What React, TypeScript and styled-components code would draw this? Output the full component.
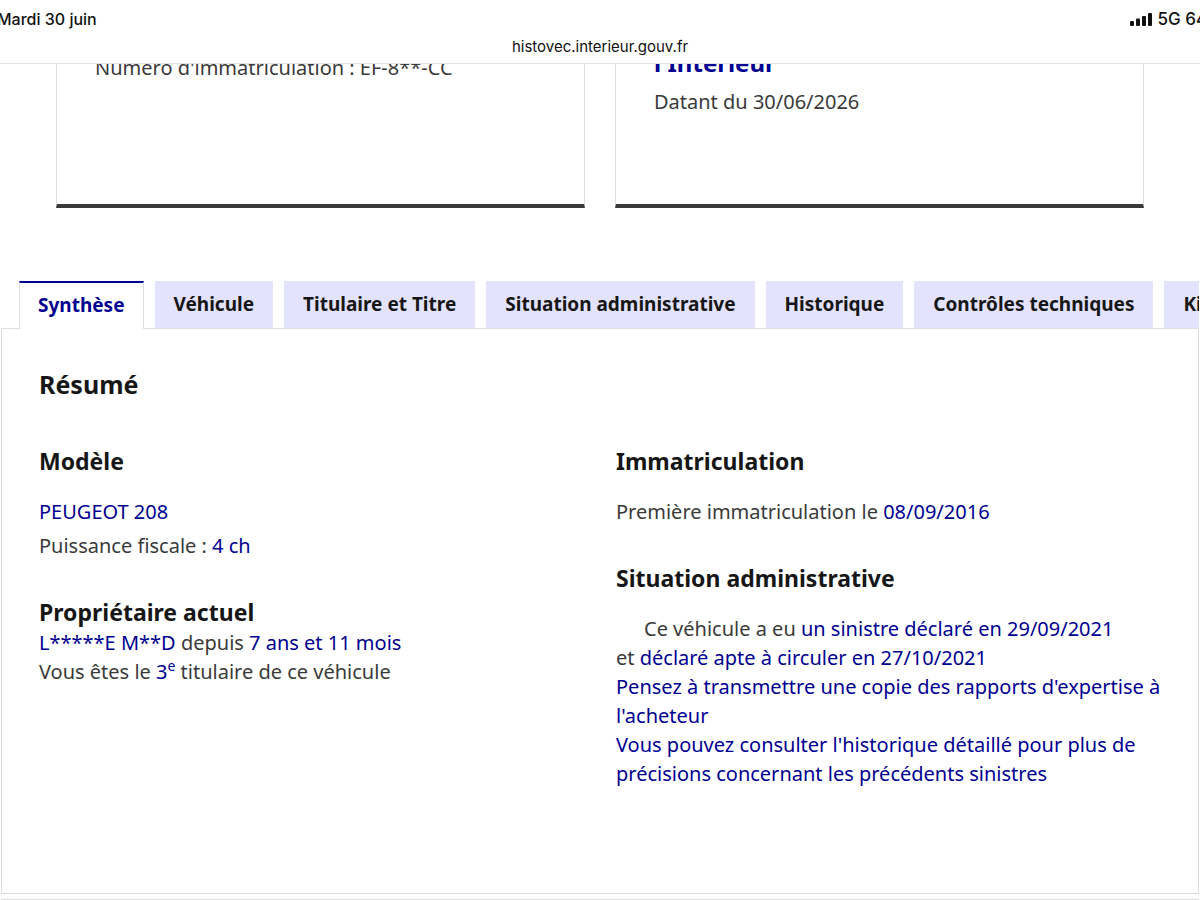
import styled, { createGlobalStyle } from "styled-components";

const GlobalStyle = createGlobalStyle`
  html, body {
    margin: 0;
    padding: 0;
    background: #fff;
  }
  body {
    width: 1200px;
    height: 900px;
    overflow: hidden;
    font-family: "Noto Sans", "Liberation Sans", sans-serif;
    color: #3a3a3a;
  }
`;

const blue = "#000091";

// browser chrome (status line + address)
const TopBar = styled.header`
  height: 63px;
  background: #fff;
  border-bottom: 1px solid #e2e2e2;
  font-family: Inter, "Liberation Sans", sans-serif;
  color: #111;
  overflow: hidden;
`;

const StatusRow = styled.div`
  display: flex;
  justify-content: space-between;
  align-items: center;
  height: 38px;
  margin: 0 -24px 0 -3px;
  font-size: 16px;
  font-weight: 500;
`;

const StatusRight = styled.div`
  display: flex;
  align-items: center;
  gap: 5px;
  font-size: 17px;
`;

const Address = styled.div`
  text-align: center;
  font-size: 15px;
  line-height: 18px;
`;

const Signal = () => (
  <svg width="23" height="13" viewBox="0 0 23 13">
    <rect x="0" y="8" width="4" height="5" rx="1" fill="#111" />
    <rect x="6" y="5.5" width="4" height="7.5" rx="1" fill="#111" />
    <rect x="12" y="3" width="4" height="10" rx="1" fill="#111" />
    <rect x="18" y="0" width="4" height="13" rx="1" fill="#111" />
  </svg>
);

// the top cards are scrolled partly under the address bar
const CardsClip = styled.div`
  height: 144px;
  overflow: hidden;
`;

const CardsRow = styled.div`
  display: grid;
  grid-template-columns: 529px 529px;
  gap: 30px;
  margin-top: -64px;
  padding-left: 56px;
`;

const Card = styled.div<{ top: number }>`
  box-sizing: border-box;
  height: 208px;
  padding: ${({ top }) => top}px 38px 0;
  border: 1px solid #ddd;
  border-bottom: 4px solid #3a3a3a;
  font-size: 20px;
  line-height: 28px;
`;

const CardTitle = styled.div`
  color: ${blue};
  font-weight: 700;
  font-size: 24px;
  line-height: 32px;
  margin-bottom: 9px;
`;

const Tabs = styled.section`
  margin-top: 73px;
  margin-left: 1px;
  width: 1198px;
`;

const TabList = styled.ul`
  display: flex;
  align-items: flex-start;
  gap: 11px;
  margin: 0 0 -1px;
  padding: 0 0 0 18px;
  list-style: none;
  white-space: nowrap;
  overflow: hidden;
  position: relative;
  z-index: 1;
`;

const Tab = styled.li<{ active?: boolean }>`
  flex-shrink: 0;
  box-sizing: border-box;
  height: ${({ active }) => (active ? 48 : 47)}px;
  padding: 0 18px 3px;
  display: flex;
  align-items: center;
  font-size: 19px;
  font-weight: 700;
  color: ${({ active }) => (active ? blue : "#161616")};
  background: ${({ active }) => (active ? "#fff" : "#e3e3fd")};
  border-top: 2px solid ${({ active }) => (active ? blue : "#e3e3fd")};
  border-left: 1px solid ${({ active }) => (active ? "#ddd" : "#e3e3fd")};
  border-right: 1px solid ${({ active }) => (active ? "#ddd" : "#e3e3fd")};
`;

const Panel = styled.div`
  border: 1px solid #ddd;
  height: 566px;
  box-sizing: border-box;
  padding: 37px 37px;
`;

const PageEnd = styled.div`
  margin-top: 5px;
  border-top: 1px solid #ddd;
`;

const PanelTitle = styled.h2`
  margin: 0 0 43px;
  font-size: 25px;
  line-height: 36px;
  font-weight: 700;
  color: #161616;
`;

const Columns = styled.div`
  display: grid;
  grid-template-columns: 577px 1fr;
`;

const Block = styled.div<{ gapTop?: number }>`
  margin-top: ${({ gapTop }) => gapTop ?? 0}px;
`;

const Heading = styled.h3<{ tight?: boolean }>`
  margin: 0 0 ${({ tight }) => (tight ? 0 : 20)}px;
  font-size: 23px;
  line-height: 32px;
  font-weight: 700;
  color: #161616;
`;

const Line = styled.p<{ indent?: boolean; spaced?: boolean }>`
  margin: 0 0 ${({ spaced }) => (spaced ? 5 : 0)}px;
  font-size: 20px;
  line-height: 29px;
  color: #3a3a3a;
  text-indent: ${({ indent }) => (indent ? "28px" : "0")};
`;

const Link = styled.span`
  color: ${blue};
`;

const Sup = styled.sup`
  font-size: 14px;
  line-height: 0;
  vertical-align: 8px;
`;

const tabs = [
  "Synthèse",
  "Véhicule",
  "Titulaire et Titre",
  "Situation administrative",
  "Historique",
  "Contrôles techniques",
  "Kilométrage",
];

export default function App() {
  return (
    <>
      <GlobalStyle />
      <TopBar>
        <StatusRow>
          <span>Mardi 30 juin</span>
          <StatusRight>
            <Signal />
            <span>5G 64%</span>
          </StatusRight>
        </StatusRow>
        <Address>histovec.interieur.gouv.fr</Address>
      </TopBar>

      <CardsClip>
        <CardsRow>
          <Card top={53}>Numéro d'immatriculation : EF-8**-CC</Card>
          <Card top={46}>
            <CardTitle>l'Intérieur</CardTitle>
            Datant du 30/06/2026
          </Card>
        </CardsRow>
      </CardsClip>

      <Tabs>
        <TabList>
          {tabs.map((t, i) => (
            <Tab key={t} active={i === 0}>
              {t}
            </Tab>
          ))}
        </TabList>
        <Panel>
          <PanelTitle>Résumé</PanelTitle>
          <Columns>
            <div>
              <Block>
                <Heading>Modèle</Heading>
                <Line spaced>
                  <Link>PEUGEOT 208</Link>
                </Line>
                <Line>
                  Puissance fiscale : <Link>4 ch</Link>
                </Line>
              </Block>
              <Block gapTop={36}>
                <Heading tight>Propriétaire actuel</Heading>
                <Line>
                  <Link>L*****E M**D</Link> depuis <Link>7 ans et 11 mois</Link>
                </Line>
                <Line>
                  Vous êtes le <Link>3<Sup>e</Sup></Link> titulaire de ce véhicule
                </Line>
              </Block>
            </div>
            <div>
              <Block>
                <Heading>Immatriculation</Heading>
                <Line>
                  Première immatriculation le <Link>08/09/2016</Link>
                </Line>
              </Block>
              <Block gapTop={36}>
                <Heading>Situation administrative</Heading>
                <Line indent>
                  Ce véhicule a eu <Link>un sinistre déclaré en 29/09/2021</Link>
                </Line>
                <Line>
                  et <Link>déclaré apte à circuler en 27/10/2021</Link>
                </Line>
                <Line>
                  <Link>Pensez à transmettre une copie des rapports d'expertise à l'acheteur</Link>
                </Line>
                <Line>
                  <Link>
                    Vous pouvez consulter l'historique détaillé pour plus de précisions concernant les précédents sinistres
                  </Link>
                </Line>
              </Block>
            </div>
          </Columns>
        </Panel>
        <PageEnd />
      </Tabs>
    </>
  );
}
